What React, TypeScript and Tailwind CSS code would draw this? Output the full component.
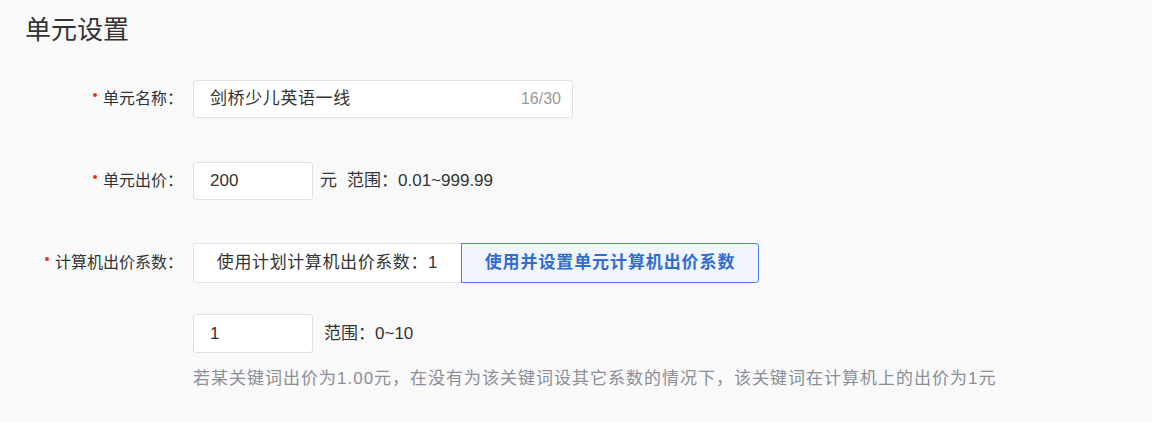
const FONT = '"Liberation Sans", "Noto Sans CJK SC", sans-serif';

const Required = () => (
  <span className="mr-[6px] inline-block h-[4px] w-[4px] -translate-y-[4px] rounded-full bg-[#e3342f]" />
);

const FormLabel = ({ text }: { text: string }) => (
  <div className="flex w-[183px] shrink-0 items-center justify-end text-[16px] text-[#333]">
    <Required />
    <span>{text}</span>
  </div>
);

const App = () => {
  return (
    <div
      className="h-[422px] w-[1152px] bg-[#f9f9fa] pt-[12px] text-[#333]"
      style={{ fontFamily: FONT }}
    >
      <h1 className="pl-[25px] text-[26px] leading-[36px] font-normal text-[#333]">单元设置</h1>

      <div className="mt-[32px] flex flex-col">
        {/* unit name */}
        <div className="flex items-center">
          <FormLabel text="单元名称：" />
          <div className="ml-[10px] flex h-[38px] w-[380px] items-center justify-between rounded-[3px] border border-[#dfe1e6] bg-white pr-[11px] pl-[16px]">
            <span className="text-[17px] tracking-[0.6px] text-[#333]">剑桥少儿英语一线</span>
            <span className="text-[16px] text-[#999]">16/30</span>
          </div>
        </div>

        {/* unit bid */}
        <div className="mt-[44px] flex items-center">
          <FormLabel text="单元出价：" />
          <div className="ml-[10px] flex h-[38px] w-[120px] items-center rounded-[3px] border border-[#dfe1e6] bg-white pl-[16px] text-[17px] text-[#333]">
            200
          </div>
          <span className="ml-[7px] text-[17px]">元</span>
          <span className="ml-[10px] text-[17px]">范围：0.01~999.99</span>
        </div>

        {/* pc bid ratio */}
        <div className="mt-[43px] flex items-center">
          <FormLabel text="计算机出价系数：" />
          <div className="ml-[10px] flex h-[40px]">
            <button className="flex w-[268px] items-center justify-center rounded-l-[3px] border border-r-0 border-[#e2e4e8] bg-white text-[17px] tracking-[0.6px] text-[#333]">
              使用计划计算机出价系数：1
            </button>
            <button className="flex w-[298px] items-center justify-center rounded-r-[3px] border border-[#4a80e0] bg-[#f0f5fe] text-[17px] font-bold tracking-[0.9px] text-[#2f6cd4]">
              使用并设置单元计算机出价系数
            </button>
          </div>
        </div>

        <div className="mt-[31px] flex items-center pl-[193px]">
          <div className="flex h-[39px] w-[120px] items-center rounded-[3px] border border-[#dfe1e6] bg-white pl-[16px] text-[17px] text-[#333]">
            1
          </div>
          <span className="ml-[11px] text-[17px]">范围：0~10</span>
        </div>

        <p className="mt-[14px] pl-[193px] text-[17px] leading-[24px] tracking-[1px] text-[#8a8e96]">
          若某关键词出价为1.00元，在没有为该关键词设其它系数的情况下，该关键词在计算机上的出价为1元
        </p>
      </div>
    </div>
  );
};

export default App;
